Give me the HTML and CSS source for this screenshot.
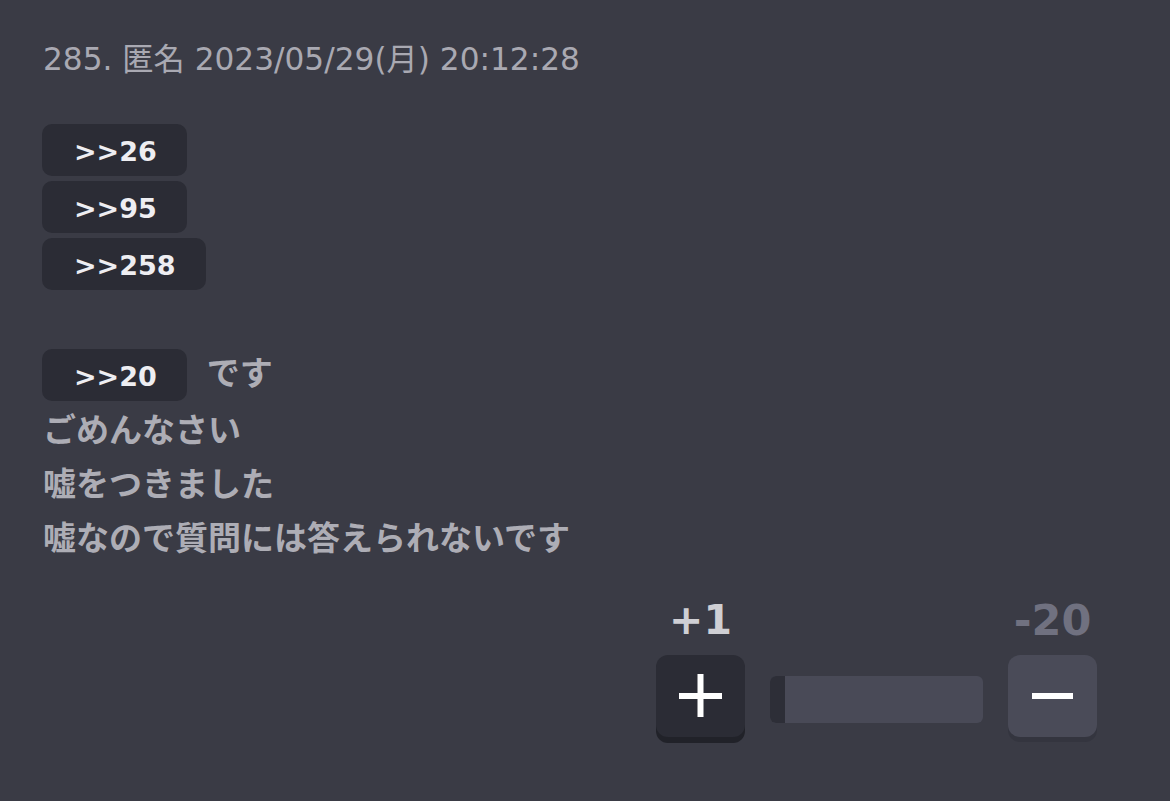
FILE: index.html
```html
<!DOCTYPE html>
<html lang="ja">
<head>
<meta charset="utf-8">
<title>285. 匿名</title>
<link rel="stylesheet" href="styles.css">
</head>
<body>
<article class="post">
  <header class="post-head">285. 匿名 2023/05/29(月) 20:12:28</header>

  <div class="anchors">
    <a class="anchor">&gt;&gt;26</a>
    <a class="anchor">&gt;&gt;95</a>
    <a class="anchor">&gt;&gt;258</a>
  </div>

  <div class="post-body">
    <div class="line line-anchor"><a class="anchor">&gt;&gt;20</a><span>です</span></div>
    <div class="line">ごめんなさい</div>
    <div class="line">嘘をつきました</div>
    <div class="line">嘘なので質問には答えられないです</div>
  </div>

  <div class="vote">
    <div class="vote-count up">+1</div>
    <div></div>
    <div class="vote-count down">-20</div>

    <button class="vote-btn plus" aria-label="plus">
      <svg width="44" height="44" viewBox="0 0 44 44"><rect x="0" y="19" width="43" height="6" fill="#fff"/><rect x="18.5" y="0" width="6" height="43" fill="#fff"/></svg>
    </button>
    <div class="ratio"><div class="ratio-fill"></div></div>
    <button class="vote-btn minus" aria-label="minus">
      <svg width="44" height="44" viewBox="0 0 44 44"><rect x="1" y="19" width="41" height="6" fill="#fff"/></svg>
    </button>
  </div>
</article>
</body>
</html>
```

FILE: styles.css
```css
html, body {
  margin: 0;
  padding: 0;
  background: #3a3b45;
}

.post {
  padding: 38px 73px 0 42px;
  font-family: "DejaVu Sans", "Noto Sans CJK JP", sans-serif;
}

.post-head {
  font-size: 31.2px;
  line-height: 42px;
  color: #a9a9b2;
  padding-left: 1px;
}

.anchors {
  display: flex;
  flex-direction: column;
  align-items: flex-start;
  gap: 5px;
  margin-top: 44px;
}

.anchor {
  display: inline-flex;
  align-items: center;
  height: 52px;
  padding: 3px 30px 0 32px;
  box-sizing: border-box;
  border-radius: 10px;
  background: #2b2c35;
  color: #eeeef2;
  font-family: "DejaVu Sans", sans-serif;
  font-weight: bold;
  font-size: 27px;
  text-decoration: none;
}

.post-body {
  margin-top: 59px;
  font-family: "Noto Sans CJK JP", sans-serif;
  font-weight: bold;
  font-size: 33px;
  color: #adadb5;
}

.line {
  line-height: 54px;
  padding-left: 1px;
}

.line-anchor {
  display: flex;
  align-items: center;
  gap: 20px;
  line-height: 52px;
  padding-left: 0;
}

.line-anchor span {
  margin-top: -8px;
}

.vote {
  display: grid;
  grid-template-columns: 89px 213px 89px;
  column-gap: 25px;
  justify-content: end;
  align-items: center;
  margin-top: 33px;
}

.vote-count {
  font-family: "DejaVu Sans", sans-serif;
  font-weight: bold;
  font-size: 41px;
  line-height: 48px;
  text-align: center;
  margin-bottom: 11px;
}

.vote-count.up { color: #cfcfd4; }
.vote-count.down { color: #707180; font-size: 43px; }

.vote-btn {
  display: flex;
  align-items: center;
  justify-content: center;
  width: 89px;
  height: 82px;
  border: none;
  border-radius: 12px;
  padding: 0;
  margin-bottom: 6px;
}

.vote-btn.plus {
  background: #2b2c35;
  box-shadow: 0 6px 0 #212229;
}

.vote-btn.minus {
  background: #4a4b58;
  box-shadow: 0 5px 0 #34353f;
}

.ratio {
  height: 47px;
  border-radius: 6px;
  background: #494a57;
  overflow: hidden;
}

.ratio-fill {
  width: 15px;
  height: 100%;
  background: #2d2e37;
}
```
